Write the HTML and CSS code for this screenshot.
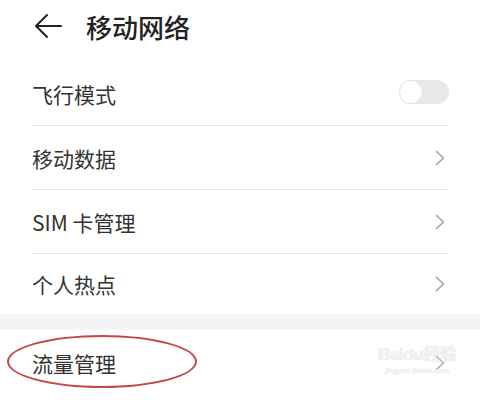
FILE: index.html
```html
<!DOCTYPE html>
<html lang="zh-CN">
<head>
    <meta charset="UTF-8">
    <meta name="viewport" content="width=device-width, initial-scale=1.0">
    <title>移动网络</title>
    <link rel="stylesheet" href="styles.css">
</head>
<body>
    <header class="top-bar">
        <svg class="back" width="28" height="26" viewBox="0 0 28 26">
            <path d="M27 13 H2 M13 2 L2 13 L13 24" fill="none" stroke="#222" stroke-width="2" stroke-linecap="round" stroke-linejoin="round"/>
        </svg>
        <h1>移动网络</h1>
    </header>

    <!-- Main settings -->
    <div class="list">
        <div class="row">
            <span class="label">飞行模式</span>
            <span class="switch"><span class="knob"></span></span>
        </div>
        <div class="row">
            <span class="label">移动数据</span>
            <svg class="chevron" width="10" height="16" viewBox="0 0 10 16"><path d="M1.5 1.5 L8.5 8 L1.5 14.5" fill="none" stroke="#a6a6a6" stroke-width="1.7" stroke-linecap="round" stroke-linejoin="round"/></svg>
        </div>
        <div class="row">
            <span class="label">SIM 卡管理</span>
            <svg class="chevron" width="10" height="16" viewBox="0 0 10 16"><path d="M1.5 1.5 L8.5 8 L1.5 14.5" fill="none" stroke="#a6a6a6" stroke-width="1.7" stroke-linecap="round" stroke-linejoin="round"/></svg>
        </div>
        <div class="row last">
            <span class="label">个人热点</span>
            <svg class="chevron" width="10" height="16" viewBox="0 0 10 16"><path d="M1.5 1.5 L8.5 8 L1.5 14.5" fill="none" stroke="#a6a6a6" stroke-width="1.7" stroke-linecap="round" stroke-linejoin="round"/></svg>
        </div>
    </div>

    <div class="gap"></div>

    <!-- Data usage -->
    <div class="list second">
        <div class="row tall last">
            <span class="label">流量管理</span>
            <svg class="chevron" width="10" height="16" viewBox="0 0 10 16"><path d="M1.5 1.5 L8.5 8 L1.5 14.5" fill="none" stroke="#b0b0b0" stroke-width="1.7" stroke-linecap="round" stroke-linejoin="round"/></svg>
        </div>
        <div class="circle-mark"></div>
        <div class="watermark">
            <div class="wm-logo">Baidu经验</div>
            <div class="wm-url">jingyan.baidu.com</div>
        </div>
    </div>
</body>
</html>
```

FILE: styles.css
```css
* {
    margin: 0;
    padding: 0;
    box-sizing: border-box;
}

body {
    width: 480px;
    height: 400px;
    overflow: hidden;
    background-color: #fff;
    color: #333;
    font-family: "Noto Sans CJK SC", "Noto Sans", sans-serif;
}

.top-bar {
    height: 52px;
    display: flex;
    align-items: center;
    padding-left: 34px;
}

.top-bar h1 {
    margin-left: 24px;
    font-size: 26px;
    font-weight: 500;
    color: #222;
    line-height: 1;
    padding-top: 2px;
}

.list {
    margin: 0 32px;
    padding-top: 10px;
}

.list.second {
    position: relative;
    padding-top: 0;
}

.row {
    height: 64px;
    display: flex;
    align-items: center;
    justify-content: space-between;
    border-bottom: 1px solid #e6e6e6;
}

.row.last {
    border-bottom: none;
    height: 60px;
}

.row.tall {
    height: 66px;
}

.label {
    font-size: 21px;
    color: #333;
}

.chevron {
    margin-right: 3px;
}

.switch {
    width: 50px;
    height: 24px;
    border-radius: 12px;
    background-color: #e8e8e8;
    position: relative;
    margin-right: -1px;
    margin-top: -4px;
}

.knob {
    position: absolute;
    left: 0;
    top: 0;
    width: 24px;
    height: 24px;
    border-radius: 50%;
    background-color: #fff;
    border: 1px solid #e2e2e2;
}

.gap {
    height: 16px;
    background-color: #f4f4f4;
}

.circle-mark {
    position: absolute;
    left: -25px;
    top: 5px;
    width: 190px;
    height: 53px;
    border: 2px solid #c4474a;
    border-radius: 50%;
}

.watermark {
    position: absolute;
    right: -8px;
    top: 16px;
    white-space: nowrap;
    text-align: center;
    color: #f2f2f2;
    text-shadow: 0 0 1px #d6d6d6;
    line-height: 1;
}

.wm-logo {
    font-family: "Liberation Sans", "Noto Sans CJK SC", sans-serif;
    font-size: 17px;
    font-weight: bold;
    letter-spacing: -0.5px;
}

.wm-url {
    margin-top: 4px;
    font-family: "Liberation Sans", sans-serif;
    font-size: 8px;
}
```
